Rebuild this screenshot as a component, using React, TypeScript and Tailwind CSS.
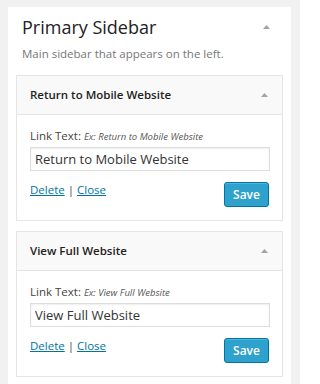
const Arrow = () => (
  <svg width="7" height="4" viewBox="0 0 7 4" className="shrink-0">
    <path d="M0 4 L3.5 0 L7 4 Z" fill="#a0a5aa" />
  </svg>
);

type WidgetProps = { title: string; example: string; value: string };

const Widget = ({ title, example, value }: WidgetProps) => (
  <div className="border border-[#e5e5e5] bg-white">
    <div className="flex items-center justify-between h-[39px] pl-[13px] pr-[14px] bg-[#f9f9f9] border-b border-[#e5e5e5]">
      <span className="text-[11.5px] font-semibold text-[#222]">{title}</span>
      <Arrow />
    </div>
    <div className="px-[13px] pt-[13px] pb-[13px]">
      <div className="text-[11.5px] text-[#444] leading-[16px]">
        Link Text: <em className="text-[9.5px] text-[#555]">Ex: {example}</em>
      </div>
      <input
        readOnly
        value={value}
        className="block mt-[2px] w-[240px] h-[24px] border border-[#dddddd] px-[4px] text-[13px] text-[#333] outline-none shadow-[inset_0_1px_2px_rgba(0,0,0,0.07)]"
      />
      <div className="mt-[11px] flex items-start justify-between">
        <div className="text-[11.5px] text-[#444] leading-[16px]">
          <a href="#" className="text-[#0074a2] underline">Delete</a> |{" "}
          <a href="#" className="text-[#0074a2] underline">Close</a>
        </div>
        <button className="h-[25px] w-[45px] rounded-[3px] border border-[#0074a2] bg-[#2ea2cc] text-[12px] font-semibold text-white shadow-[inset_0_1px_0_rgba(120,200,230,0.5)]">
          Save
        </button>
      </div>
    </div>
  </div>
);

export default function App() {
  return (
    <div className="w-[300px] h-[384px] overflow-hidden bg-[#f1f1f1] pt-[7px] pl-[8px] font-['Open_Sans',sans-serif]">
      <div className="w-[283px] h-[400px] bg-white shadow-[0_1px_1px_rgba(0,0,0,0.04)] px-[8px]">
        <div className="flex items-center justify-between pl-[6px] pr-[13px] pt-[8px]">
          <h3 className="text-[18px] font-normal text-[#222] leading-[24px]">Primary Sidebar</h3>
          <Arrow />
        </div>
        <p className="pl-[6px] mt-[7px] text-[11.5px] text-[#777] leading-[16px]">
          Main sidebar that appears on the left.
        </p>
        <div className="mt-[13px] flex flex-col gap-[10px]">
          <Widget
            title="Return to Mobile Website"
            example="Return to Mobile Website"
            value="Return to Mobile Website"
          />
          <Widget title="View Full Website" example="View Full Website" value="View Full Website" />
        </div>
      </div>
    </div>
  );
}
